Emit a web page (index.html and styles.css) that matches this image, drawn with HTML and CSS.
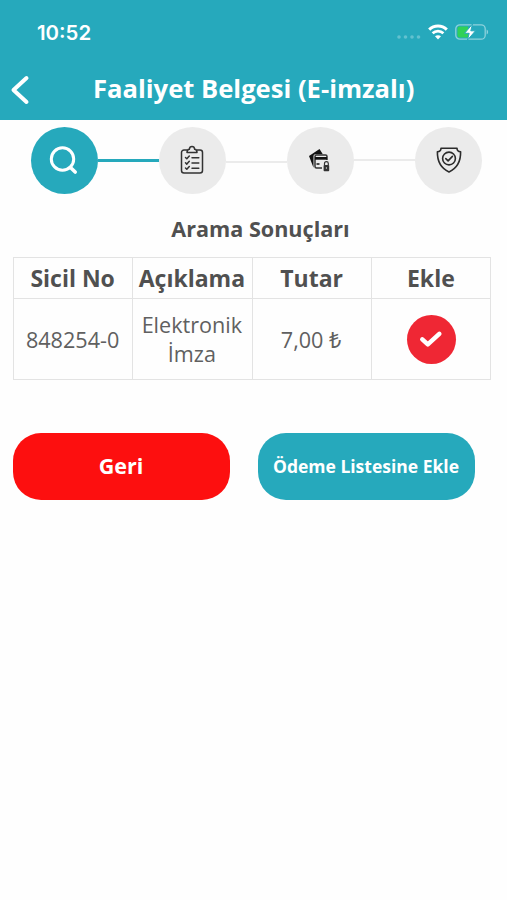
FILE: index.html
```html
<!DOCTYPE html>
<html lang="tr">
<head>
    <meta charset="UTF-8">
    <meta name="viewport" content="width=device-width, initial-scale=1.0">
    <title>Faaliyet Belgesi (E-imzalı)</title>
    <link rel="stylesheet" href="styles.css">
</head>
<body>
    <header class="header">
        <div class="status-bar">
            <span class="time">10:52</span>
            <div class="status-icons">
                <svg class="signal" width="24" height="4" viewBox="0 0 24 4">
                    <circle cx="2" cy="2" r="1.8"/>
                    <circle cx="8.5" cy="2" r="1.8"/>
                    <circle cx="15" cy="2" r="1.8"/>
                    <circle cx="21.5" cy="2" r="1.8"/>
                </svg>
                <svg class="wifi" width="20" height="16" viewBox="0 0 20 16">
                    <path d="M1.2 5.6C6 .7 14 .7 18.8 5.6" stroke-width="3"/>
                    <path d="M4.6 9.3c3-2.9 7.8-2.9 10.8 0" stroke-width="2.7"/>
                    <path d="M10 15.5l-3-3.2c1.7-1.5 4.3-1.5 6 0z" fill="#fff" stroke="none"/>
                </svg>
                <svg class="battery" width="34" height="16" viewBox="0 0 34 16">
                    <rect x=".8" y=".8" width="29.4" height="14.4" rx="4" fill="none" stroke="#8ed2dc" stroke-width="1.3"/>
                    <path d="M31.6 5.5c2 .8 2 4.2 0 5z" fill="#8ed2dc"/>
                    <path d="M4.5 2.6H13v10.8H4.5a2 2 0 0 1-2-2V4.6a2 2 0 0 1 2-2z" fill="#30d158"/>
                    <path d="M17.5 0L9.600 9.300h4.600L12.500 16l8-9.200h-4.700z" fill="#fff" stroke="#26a9bc" stroke-width="1"/>
                </svg>
            </div>
        </div>
        <div class="title-bar">
            <a class="back" href="#" aria-label="Geri">
                <svg width="20" height="30" viewBox="0 0 20 30">
                    <path d="M16.5 3L3.5 15l13 12"/>
                </svg>
            </a>
            <h1>Faaliyet Belgesi (E-imzalı)</h1>
        </div>
    </header>

    <main class="container">
        <div class="steps">
            <div class="step active">
                <svg width="30" height="30" viewBox="0 0 30 30" fill="none" stroke="#fff" stroke-linecap="round">
                    <circle cx="13.5" cy="14" r="11.2" stroke-width="3"/>
                    <path d="M22 23l4.200 4" stroke-width="3.6"/>
                </svg>
            </div>
            <div class="line done"></div>
            <div class="step">
                <svg width="24" height="30" viewBox="0 0 24 30" fill="none" stroke="#333" stroke-width="1.5" stroke-linecap="round" stroke-linejoin="round">
                    <path d="M7 5H4a2.5 2.5 0 0 0-2.5 2.5v18A2.5 2.5 0 0 0 4 28h16a2.5 2.5 0 0 0 2.5-2.5v-18A2.5 2.5 0 0 0 20 5h-3"/>
                    <path d="M7 7.5c0-2 .5-3 2.3-3.2C9.5 2.5 10.5 1.5 12 1.5s2.5 1 2.7 2.8C16.5 4.500 17 5.500 17 7.500z"/>
                    <path d="M5.5 12.5l1.3 1.3L9.3 11M5.5 17.8l1.3 1.3 2.5-2.8M5.5 23l1.3 1.3 2.5-2.8M12 12.8h6.8M12 18h6.8M12 23.3h6.8"/>
                </svg>
            </div>
            <div class="line low"></div>
            <div class="step">
                <svg width="22" height="24" viewBox="0 0 22 24">
                    <path d="M0 8L10.5 1l3.3 5.3H6.500c-1.400 0-2 .7-2 2v11.500z" fill="#111"/>
                    <path d="M18 12V8.500a1.500 1.500 0 0 0-1.500-1.500h-9A1.500 1.500 0 0 0 6 8.500v10A1.500 1.500 0 0 0 7.500 20H13" fill="none" stroke="#333" stroke-width="1.5"/>
                    <path d="M6 9h12v2.700H6z" fill="#111"/>
                    <path d="M7.5 16h3" stroke="#111" stroke-width="1.5"/>
                    <path d="M15.5 17v-1.500a1.900 1.900 0 0 1 3.800 0V17" fill="none" stroke="#333" stroke-width="1.2"/>
                    <rect x="14.6" y="17" width="5.6" height="6.2" rx=".8" fill="#333"/>
                    <path d="M17.4 19v2" stroke="#aaa"/>
                </svg>
            </div>
            <div class="line"></div>
            <div class="step">
                <svg width="26" height="26" viewBox="0 0 26 26" fill="none" stroke="#2b2b2b" stroke-width="1.6" stroke-linecap="round" stroke-linejoin="round">
                    <path d="M5 1.2h16c0 2 1.3 3.4 3.6 3.6C24.8 14 21.5 21 13 25 4.5 21 1.2 14 1.4 4.8 3.7 4.6 5 3.2 5 1.2z"/>
                    <circle cx="13" cy="11.5" r="6.4"/>
                    <path d="M9.8 11.6l2.3 2.3 4.3-4.5"/>
                </svg>
            </div>
        </div>

        <h2>Arama Sonuçları</h2>

        <table>
            <tr>
                <th>Sicil No</th>
                <th>Açıklama</th>
                <th>Tutar</th>
                <th>Ekle</th>
            </tr>
            <tr>
                <td>848254-0</td>
                <td>Elektronik İmza</td>
                <td>7,00 ₺</td>
                <td>
                    <span class="check">
                        <svg width="24" height="18" viewBox="0 0 24 18">
                            <path d="M3.3 9.3l5.5 5L20.3 3.8"/>
                        </svg>
                    </span>
                </td>
            </tr>
        </table>

        <div class="buttons">
            <button class="btn btn-back">Geri</button>
            <button class="btn btn-add">Ödeme Listesine Ekle</button>
        </div>
    </main>
</body>
</html>
```
FILE: styles.css
```css
* {
    box-sizing: border-box;
}
body {
    margin: 0;
    font-family: 'Open Sans', 'Noto Sans', sans-serif;
    background-color: #fefefe;
    color: #505050;
}
.header {
    height: 120px;
    background-color: #26a9bc;
    color: #ffffff;
}
.status-bar {
    display: flex;
    justify-content: space-between;
    align-items: center;
    height: 64px;
    padding: 0 18px 0 37px;
}
.time {
    font-family: 'Inter', sans-serif;
    font-size: 20.4px;
    font-weight: 600;
}
.status-icons {
    display: flex;
    align-items: center;
}
.signal {
    margin: 10px 7px 0 0;
    fill: #62c1cf;
}
.wifi {
    margin-right: 7px;
    fill: none;
    stroke: #ffffff;
}
.title-bar {
    display: flex;
    align-items: center;
    height: 52px;
    padding-left: 10px;
}
.back {
    display: flex;
    width: 83px;
}
.back svg {
    fill: none;
    stroke: #ffffff;
    stroke-width: 4;
    stroke-linecap: round;
    stroke-linejoin: round;
}
h1 {
    margin: 0 0 2px;
    font-size: 25.6px;
    line-height: 34px;
    font-weight: 700;
    white-space: nowrap;
}
.container {
    padding: 6px 13px 0;
}
.steps {
    display: flex;
    align-items: center;
    height: 68px;
    padding: 0 12px 0 17.5px;
}
.step {
    display: flex;
    align-items: center;
    justify-content: center;
    flex: none;
    width: 67px;
    height: 67px;
    border-radius: 50%;
    background-color: #ebebeb;
}
.step.active {
    background-color: #26a9bc;
}
.line {
    flex: 1;
    height: 2px;
    background-color: #ebebeb;
}
.line.done {
    height: 3px;
    background-color: #26a9bc;
}
.line.low {
    margin-top: 4px;
}
h2 {
    margin: 19px 0 12px;
    padding-left: 14px;
    font-size: 21.6px;
    line-height: 32px;
    font-weight: 700;
    text-align: center;
}
table {
    width: 478px;
    table-layout: fixed;
    border-collapse: collapse;
}
th, td {
    border: 1px solid #e3e3e3;
    padding: 0 1px 0 0;
    text-align: center;
    font-size: 21.6px;
    line-height: 29px;
}
th {
    height: 41px;
    font-size: 23px;
    font-weight: 700;
}
th:nth-child(n+3) {
    padding: 0;
}
td {
    height: 81px;
    padding: 0 1px 0 0;
    color: #606060;
}
td:last-child {
    padding: 0 0 0 1px;
}
.check {
    display: flex;
    align-items: center;
    justify-content: center;
    width: 49px;
    height: 49px;
    margin: 0 auto;
    border-radius: 50%;
    background-color: #ef2734;
}
.check svg {
    fill: none;
    stroke: #ffffff;
    stroke-width: 4.5;
    stroke-linecap: round;
    stroke-linejoin: round;
}
.buttons {
    display: flex;
    gap: 28px;
    margin-top: 53px;
}
.btn {
    width: 217px;
    height: 67px;
    padding: 0 1px 1px 0;
    border: none;
    border-radius: 28px;
    color: #ffffff;
    font-family: inherit;
    font-weight: 700;
    white-space: nowrap;
}
.btn-back {
    padding-bottom: 2px;
    background-color: #fd0f0f;
    font-size: 21.5px;
}
.btn-add {
    background-color: #26a9bc;
    font-size: 17.5px;
}
```
